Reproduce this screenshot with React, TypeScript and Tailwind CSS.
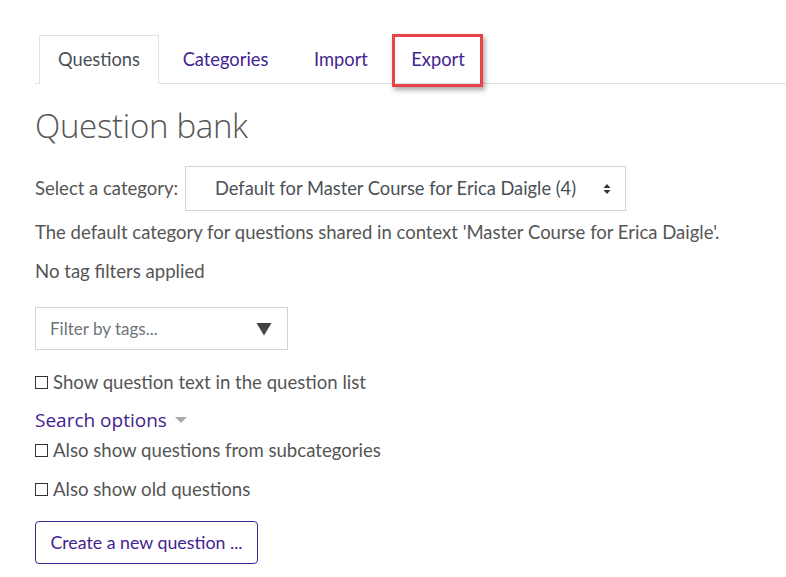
import React from "react";

const body = "font-['Lato','Liberation_Sans',sans-serif] text-[#555]";

const tabs = [
  { label: "Questions", w: "w-[120px]", active: true },
  { label: "Categories", w: "w-[133px]", active: false },
  { label: "Import", w: "w-[98px]", active: false },
  { label: "Export", w: "w-[96px]", active: false },
];

const Check = ({ label }: { label: string }) => (
  <label className="flex items-center gap-[5px] text-[18.6px] leading-[26px]">
    <span className="block w-[13px] h-[13px] border border-[#333] bg-white" />
    <span>{label}</span>
  </label>
);

const App = () => {
  return (
    <div className={`w-[786px] h-[577px] bg-white overflow-hidden ${body}`}>
      <div className="pl-[35px] pt-[35px]">
        {/* tabs */}
        <div className="relative flex pl-[4px] border-b border-[#dee2e6] h-[49px]">
          {tabs.map((t) => (
            <div
              key={t.label}
              className={`${t.w} h-[49px] flex items-center justify-center text-[18.3px] ${
                t.active
                  ? "border border-b-0 border-[#dee2e6] bg-white text-[#495057] -mb-px h-[49px]"
                  : "text-[#43238f]"
              }`}
            >
              {t.label}
            </div>
          ))}
          <div className="absolute left-[357px] top-[-1px] w-[91px] h-[53px] border-[3px] border-[#e9434a] shadow-[2px_3px_5px_rgba(0,0,0,0.35)]" />
        </div>

        <h2 className="mt-[22px] h-[40px] leading-[40px] text-[33px] font-light font-['Open_Sans','Lato',sans-serif] text-[#555] tracking-[-0.3px]">
          Question bank
        </h2>

        <div className="mt-[20px] flex items-center">
          <span className="text-[18.5px] w-[150px]">Select a category:</span>
          <div className="w-[441px] h-[45px] border border-[#ced4da] flex items-center pl-[29px] pr-[14px] justify-between text-[18.3px] text-[#495057]">
            <span>Default for Master Course for Erica Daigle (4)</span>
            <svg width="8" height="12" viewBox="0 0 8 12">
              <path d="M4 1 L7.5 5 H0.5 Z" fill="#333" />
              <path d="M4 11 L7.5 7 H0.5 Z" fill="#333" />
            </svg>
          </div>
        </div>

        <p className="mt-[8px] text-[18.5px] leading-[27px]">
          The default category for questions shared in context 'Master Course for Erica Daigle'.
        </p>

        <p className="mt-[12px] text-[18.6px] leading-[27px]">No tag filters applied</p>

        <div className="mt-[22px] w-[253px] h-[43px] border border-[#ced4da] flex items-center justify-between pl-[14px] pr-[15px] text-[17px] text-[#6c757d]">
          <span>Filter by tags...</span>
          <svg width="16" height="14" viewBox="0 0 16 14">
            <path d="M0.5 1 H15.5 L8 13.5 Z" fill="#444" />
          </svg>
        </div>

        <div className="mt-[19px]">
          <Check label="Show question text in the question list" />
        </div>

        <div className="mt-[12px] flex items-center gap-[8px] text-[#43238f] text-[19px] leading-[26px] font-['Open_Sans','Lato',sans-serif]">
          <span>Search options</span>
          <svg width="12" height="7" viewBox="0 0 12 7">
            <path d="M0 0 H12 L6 6 Z" fill="#aaa" />
          </svg>
        </div>

        <div className="mt-[4px]">
          <Check label="Also show questions from subcategories" />
        </div>
        <div className="mt-[13px]">
          <Check label="Also show old questions" />
        </div>

        <button className="mt-[19px] h-[43px] w-[223px] border border-[#43238f] rounded-[4px] text-[#43238f] text-[17.8px] flex items-center justify-center">
          Create a new question ...
        </button>
      </div>
    </div>
  );
};

export default App;
